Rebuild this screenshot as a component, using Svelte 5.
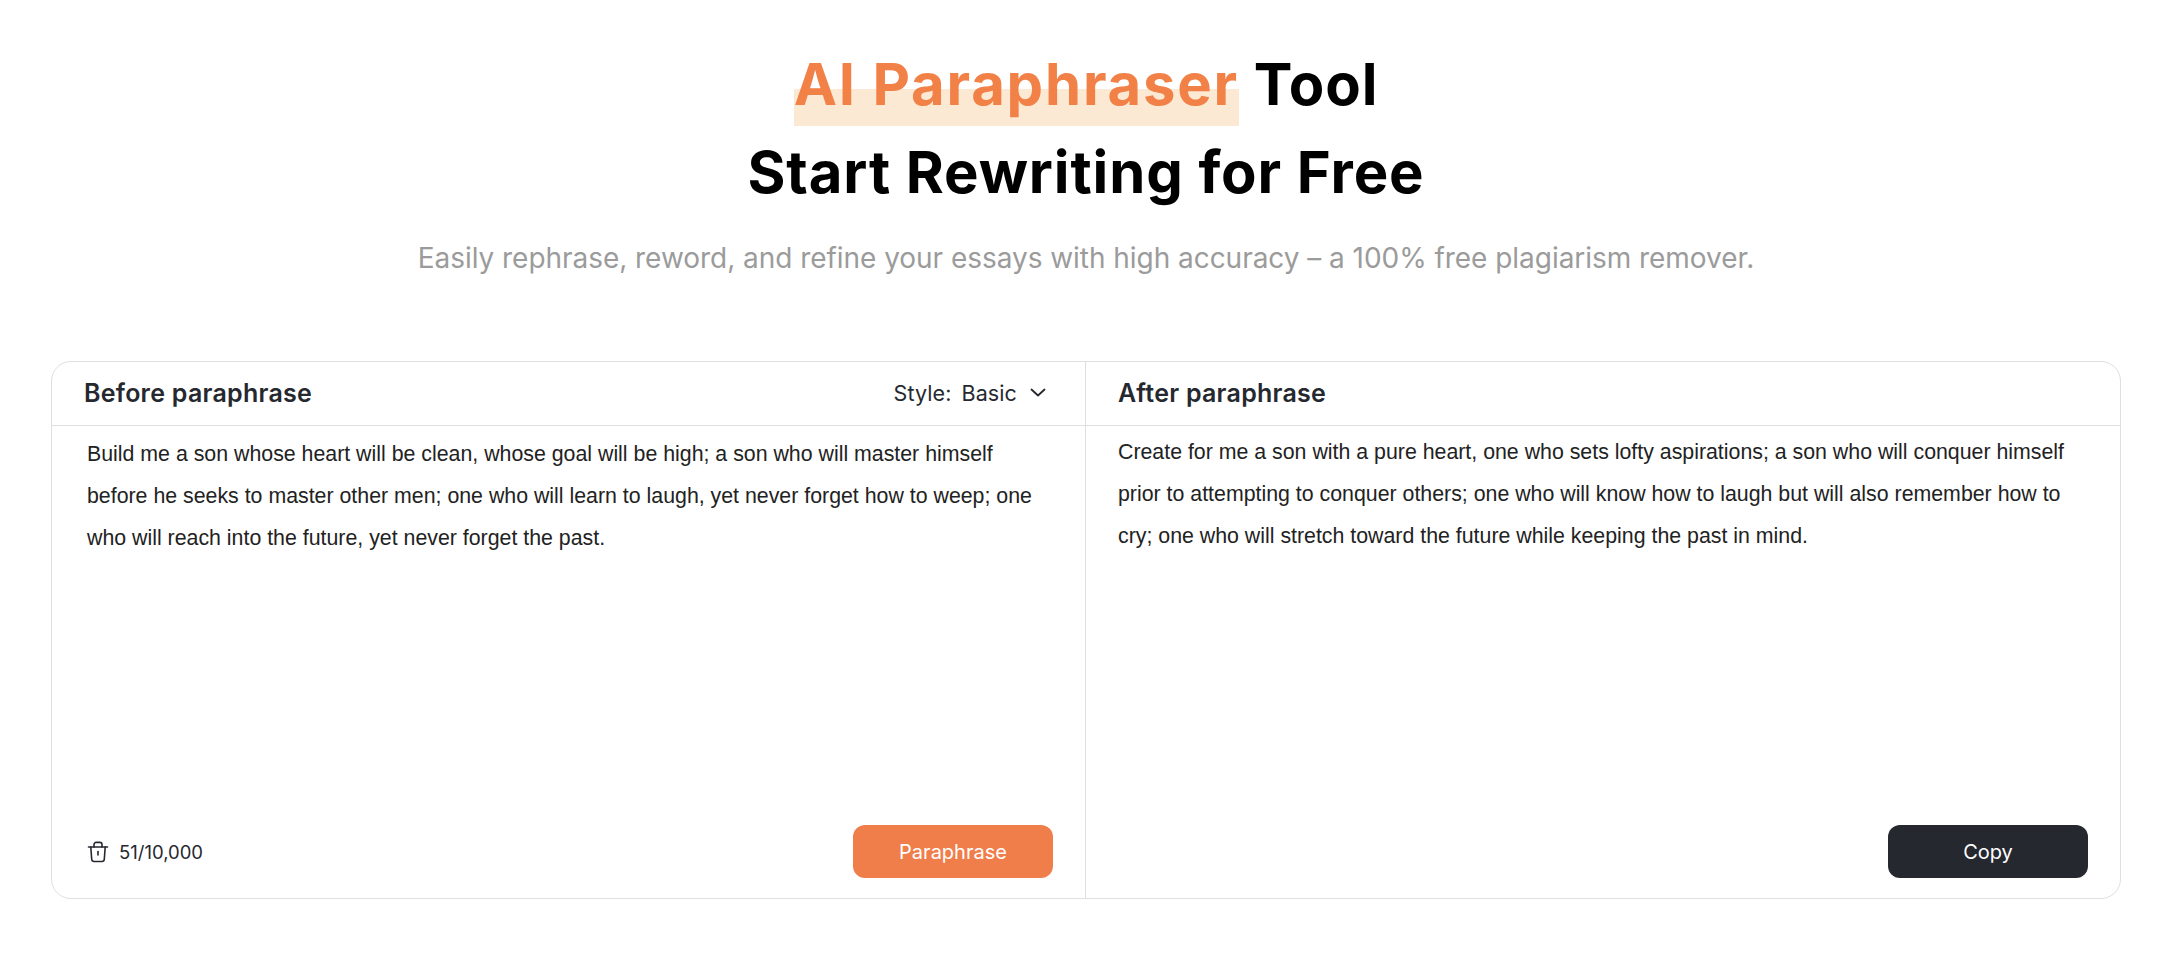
<script>
  const before = "Build me a son whose heart will be clean, whose goal will be high; a son who will master himself before he seeks to master other men; one who will learn to laugh, yet never forget how to weep; one who will reach into the future, yet never forget the past.";
  const after = "Create for me a son with a pure heart, one who sets lofty aspirations; a son who will conquer himself prior to attempting to conquer others; one who will know how to laugh but will also remember how to cry; one who will stretch toward the future while keeping the past in mind.";
</script>

<main class="page">
  <header class="hero">
    <h1>
      <span class="line"><span class="mark">AI Paraphraser</span> Tool</span>
      <span class="line">Start Rewriting for Free</span>
    </h1>
    <p class="sub">Easily rephrase, reword, and refine your essays with high accuracy – a 100% free plagiarism remover.</p>
  </header>

  <section class="card">
    <div class="col">
      <div class="head">
        <h2>Before paraphrase</h2>
        <div class="style">
          <span>Style:</span>
          <span>Basic</span>
          <svg width="16" height="9" viewBox="0 0 16 9" fill="none" stroke="#26282f" stroke-width="1.8" stroke-linecap="round" stroke-linejoin="round"><path d="M1.500 1.500 8 7.500 14.500 1.500" /></svg>
        </div>
      </div>
      <p class="text left">{before}</p>
      <div class="foot">
        <div class="count">
          <svg width="22" height="22" viewBox="0 0 22 22" fill="none" stroke="#26282f" stroke-width="1.6" stroke-linecap="round" stroke-linejoin="round">
            <path d="M1.500 6h19" />
            <path d="M7 6V3.600C7 2.200 8 1.400 9.200 1.400h3.600c1.200 0 2.200.8 2.200 2.200V6" />
            <path d="M3.800 6l.9 12.300c.1 1.400 1 2.200 2.300 2.200h8c1.300 0 2.200-.8 2.300-2.200L18.200 6" />
            <path d="M11 10.500v3.500" />
          </svg>
          <span>51/10,000</span>
        </div>
        <button class="btn orange">Paraphrase</button>
      </div>
    </div>
    <div class="col right">
      <div class="head">
        <h2>After paraphrase</h2>
      </div>
      <p class="text">{after}</p>
      <div class="foot end">
        <button class="btn dark">Copy</button>
      </div>
    </div>
  </section>
</main>

<style>
  :global(body) {
    margin: 0;
    background: #fff;
  }
  .page {
    padding: 0 37px 0 51px;
    font-family: Inter, "Noto Sans", sans-serif;
  }
  .hero {
    text-align: center;
    padding-top: 40px;
  }
  h1 {
    margin: 0;
    font-size: 58px;
    font-weight: 700;
    line-height: 88px;
    color: #000;
    letter-spacing: 0.9px;
  }
  .line {
    display: block;
  }
  .mark {
    display: inline-block;
    color: #f28148;
    letter-spacing: 1.8px;
    background: linear-gradient(#fce9d4, #fce9d4) no-repeat 0 49px / 100% 37px;
  }
  .sub {
    margin: 22px 0 0;
    font-size: 28px;
    line-height: 40px;
    color: #9b9b9b;
    font-weight: 400;
    letter-spacing: -0.04px;
  }
  .card {
    display: grid;
    grid-template-columns: 1033px 1fr;
    margin-top: 83px;
    height: 538px;
    box-sizing: border-box;
    border: 1.5px solid #dfdfdf;
    border-radius: 20px;
  }
  .col {
    display: flex;
    flex-direction: column;
    min-width: 0;
  }
  .col.right {
    border-left: 1.5px solid #dfdfdf;
  }
  .head {
    flex: none;
    height: 64px;
    box-sizing: border-box;
    border-bottom: 1.5px solid #dfdfdf;
    display: flex;
    align-items: center;
    justify-content: space-between;
    padding: 0 39px 2px 32px;
  }
  h2 {
    margin: 0;
    font-size: 25px;
    font-weight: 600;
    letter-spacing: 0.25px;
    color: #26282f;
  }
  .style {
    display: flex;
    align-items: center;
    gap: 10px;
    font-size: 21.5px;
    letter-spacing: 0.1px;
    color: #26282f;
  }
  .style svg {
    margin-left: 3px;
  }
  .text {
    flex: 1;
    margin: 0;
    padding: 5px 32px 0 32px;
    font-family: "Liberation Sans", Arial, sans-serif;
    font-size: 21.33px;
    line-height: 42px;
    color: #222;
  }
  .text.left {
    padding: 7px 34px 0 35px;
  }
  .foot {
    flex: none;
    display: flex;
    align-items: center;
    justify-content: space-between;
    padding: 0 32px 20px 35px;
  }
  .foot.end {
    justify-content: flex-end;
  }
  .count {
    display: flex;
    align-items: center;
    gap: 10px;
    font-size: 18.5px;
    color: #26282f;
  }
  .btn {
    width: 200px;
    height: 53px;
    border: none;
    border-radius: 12px;
    color: #fff;
    font-family: inherit;
    font-size: 20px;
    font-weight: 400;
  }
  .orange {
    background: #f07e4a;
  }
  .dark {
    background: #262830;
  }
</style>
